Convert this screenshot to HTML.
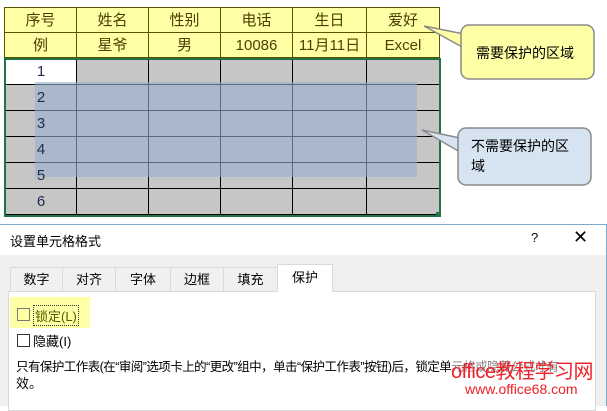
<!DOCTYPE html><html><head><meta charset="utf-8"><style>
body{margin:0;width:607px;height:405px;background:#fff;position:relative;overflow:hidden;font-family:"Liberation Sans","Noto Sans CJK SC",sans-serif}
.a{position:absolute}
.h{background:#ffffa6;border-right:1px solid #5a5200;border-bottom:1px solid #5a5200;color:#4b4000;font-size:15px;text-align:center;box-sizing:border-box;line-height:25px}
.g{background:#c6c6c6;border-right:1px solid #000;border-bottom:1px solid #000;box-sizing:border-box}
.n{color:#1f2a50;font-size:15px;text-align:center;line-height:26px}
.tab{position:absolute;top:267px;height:24px;background:#f0f0f0;border:1px solid #d9d9d9;border-bottom:none;box-sizing:border-box;font-size:13px;text-align:center;line-height:23px;color:#000}
</style></head><body>
<div class="a" style="left:5px;top:7px;width:435px;height:1px;background:#5a5200"></div>
<div class="a" style="left:4px;top:7px;width:1px;height:51px;background:#5a5200"></div>
<div id="t"></div>
<script>
var xs=[5,77,149,221,293,367,440];var hd=[["序号","姓名","性别","电话","生日","爱好"],["例","星爷","男","10086","11月11日","Excel"]];var s="";
for(var r=0;r<2;r++)for(var c=0;c<6;c++)s+='<div class="a h" style="left:'+xs[c]+'px;top:'+(8+r*25)+'px;width:'+(xs[c+1]-xs[c])+'px;height:25px">'+hd[r][c]+'</div>';
var ys=[59,85,111,137,163,189,215];
for(var r=0;r<6;r++)for(var c=0;c<6;c++){var bg=(r==0&&c==0)?'#fff':'#c6c6c6';s+='<div class="a g" style="background:'+bg+';left:'+xs[c]+'px;top:'+ys[r]+'px;width:'+(xs[c+1]-xs[c])+'px;height:'+(ys[r+1]-ys[r])+'px"></div>';}
document.getElementById('t').innerHTML=s;
</script>
<div class="a" style="left:35px;top:82px;width:382px;height:95px;background:rgba(150,175,205,.6)"></div>
<div class="a n" style="left:5px;top:59px;width:72px">1</div>
<div class="a n" style="left:5px;top:85px;width:72px">2</div>
<div class="a n" style="left:5px;top:111px;width:72px">3</div>
<div class="a n" style="left:5px;top:137px;width:72px">4</div>
<div class="a n" style="left:5px;top:163px;width:72px">5</div>
<div class="a n" style="left:5px;top:189px;width:72px">6</div>
<div class="a" style="left:4px;top:58px;width:433px;height:155px;border:2px solid #217346"></div>
<div class="a" style="left:436px;top:212px;width:5px;height:5px;background:#217346"></div>
<svg class="a" style="left:0;top:0" width="607" height="220">
<polygon points="424,26 464,34 464,48" fill="#ffffa6" stroke="#8a8a8a" stroke-width="1.5"/>
<rect x="461" y="25" width="133" height="54" rx="8" fill="#ffffa6" stroke="#8a8a8a" stroke-width="1.5"/>
<polygon points="422,130 460,138 460,152" fill="#d6e4f2" stroke="#8a8a8a" stroke-width="1.5"/>
<rect x="458" y="128" width="133" height="57" rx="8" fill="#d6e4f2" stroke="#8a8a8a" stroke-width="1.5"/>
<rect x="460" y="137" width="3" height="14" fill="#d6e4f2"/><rect x="463" y="34" width="3" height="13" fill="#ffffa6"/>
</svg>
<div class="a" style="left:476px;top:43px;font-size:14px;color:#000">需要保护的区域</div>
<div class="a" style="left:471px;top:136px;width:102px;font-size:14px;line-height:20px;color:#000">不需要保护的区域</div>
<div class="a" style="left:0;top:224px;width:606px;height:181px;border-top:1px solid #7ea8c8;border-right:1px solid #7ea8c8;background:#f0f0f0"></div>
<div class="a" style="left:0;top:225px;width:606px;height:30px;background:#fff"></div>
<div class="a" style="left:10px;top:231px;font-size:13px">设置单元格格式</div>
<div class="a" style="left:531px;top:230px;font-size:13px">?</div>
<div class="a" style="left:573px;top:227px;font-size:18px;font-weight:300">✕</div>
<div class="a" style="left:8px;top:291px;width:588px;height:120px;background:#fff;border:1px solid #d9d9d9;box-sizing:border-box"></div>
<div class="tab" style="left:10px;width:53px">数字</div>
<div class="tab" style="left:62px;width:54px">对齐</div>
<div class="tab" style="left:115px;width:56px">字体</div>
<div class="tab" style="left:170px;width:54px">边框</div>
<div class="tab" style="left:223px;width:55px">填充</div>
<div class="tab" style="left:277px;top:264px;height:28px;width:56px;background:#fff;line-height:26px">保护</div>
<div class="a" style="left:10px;top:297px;width:80px;height:31px;background:#ffffa6"></div>
<div class="a" style="left:17px;top:308px;width:11px;height:11px;border:1px solid #777"></div>
<div class="a" style="left:33px;top:305px;font-size:13px;color:#5a5a00;border:1px dotted #333;padding:0 1px">锁定(L)</div>
<div class="a" style="left:17px;top:334px;width:11px;height:11px;border:1px solid #333"></div>
<div class="a" style="left:33px;top:331px;font-size:13px">隐藏(I)</div>
<div class="a" style="left:16px;top:356px;font-size:12.5px;white-space:nowrap;letter-spacing:-0.55px">只有保护工作表(在“审阅”选项卡上的“更改”组中，单击“保护工作表”按钮)后，锁定单元格或隐藏公式才有</div>
<div class="a" style="left:16px;top:373px;font-size:13px">效。</div>
<div class="a" style="left:451px;top:355px;font-size:20px;color:#f0202a;background:rgba(255,255,255,.5);letter-spacing:-0.5px">office教程学习网</div>
<div class="a" style="left:465px;top:381px;font-size:14px;color:#f0202a">www.office68.com</div>
</body></html>
